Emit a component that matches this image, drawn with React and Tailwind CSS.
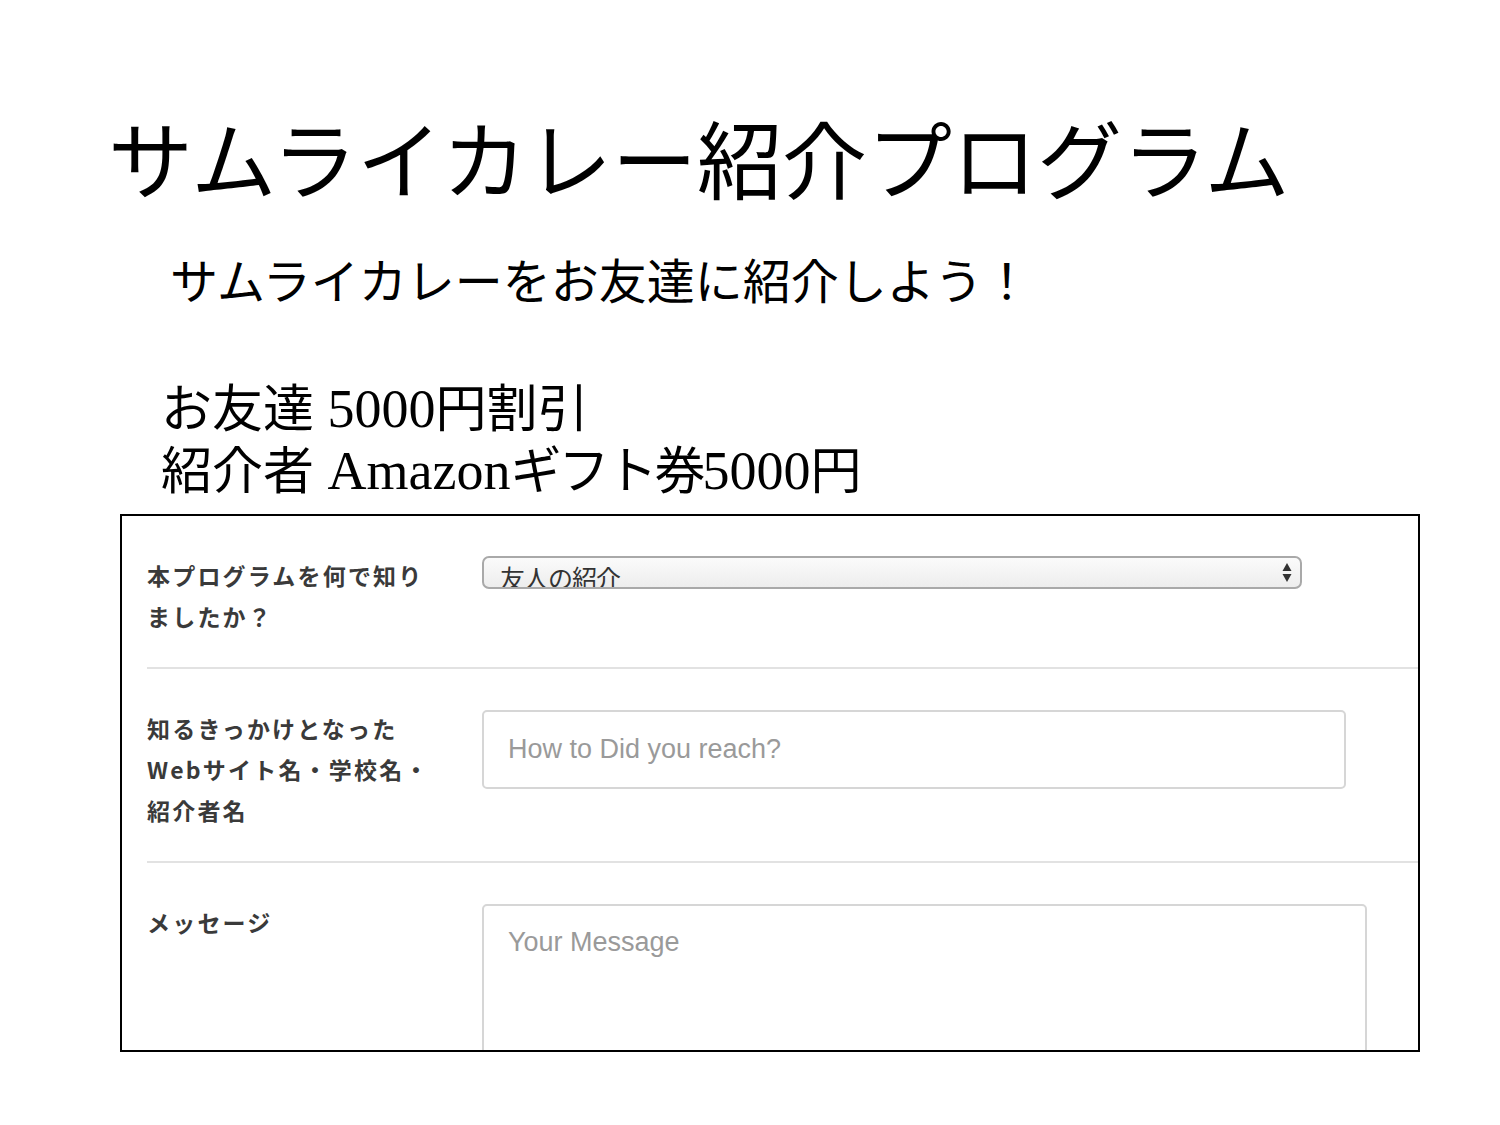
import React from 'react';

const jp = '"Noto Sans CJK JP", "Liberation Sans", sans-serif';
const serif = '"Liberation Serif", "Noto Sans CJK JP", serif';

const Row = ({ label, children, last }) => (
  <div className={`ml-[25px] flex pt-[39px] pb-[30px] ${last ? '' : 'border-b-2 border-[#e2e2e2]'}`}>
    <div
      className="w-[335px] shrink-0 text-[23px] leading-[41px] font-bold tracking-[2.2px] text-[#3a3a3a]"
      style={{ fontFamily: jp }}
    >
      {label}
    </div>
    <div className="flex-1">{children}</div>
  </div>
);

const Num = ({ children }) => (
  <span className="text-[54px] leading-[40px]" style={{ fontFamily: serif }}>
    {children}
  </span>
);

const App = () => {
  return (
    <div className="w-[1500px] h-[1125px] bg-white text-black" style={{ fontFamily: jp }}>
      <div className="pt-[106px] pl-[108px] text-[85px] leading-[100px]">サムライカレー紹介プログラム</div>
      <div className="pt-[44px] pl-[170px] text-[48px] leading-[56px]">サムライカレーをお友達に紹介しよう！</div>

      <div className="pt-[68px] pl-[161px] text-[51px] leading-[62px]">
        <div>
          お友達<Num> 5000</Num>円割引
        </div>
        <div>
          紹介者<Num> Amazon</Num>
          <span className="tracking-[-3px]">ギフト券</span>
          <Num>5000</Num>円
        </div>
      </div>

      <div className="mt-[16px] ml-[120px] w-[1300px] h-[538px] border-2 border-black overflow-hidden">
        <Row
          label={
            <>
              本プログラムを何で知り
              <br />
              ましたか？
            </>
          }
        >
          <div className="w-[820px] h-[33px] mt-[1px] rounded-[7px] border-2 border-[#a9a9a9] bg-gradient-to-b from-[#fbfbfb] to-[#ededed] overflow-hidden flex items-start justify-between pl-[16px] pr-[8px]">
            <span className="mt-[4px] text-[25px] leading-[30px] text-[#333] tracking-[-1px]">友人の紹介</span>
            <svg className="mt-[5px]" width="10" height="19" viewBox="0 0 10 19">
              <path d="M5 0 L9.5 8 L0.5 8 Z" fill="#333" />
              <path d="M5 19 L9.5 11 L0.5 11 Z" fill="#333" />
            </svg>
          </div>
        </Row>
        <Row
          label={
            <>
              知るきっかけとなった
              <br />
              Webサイト名・学校名・
              <br />
              紹介者名
            </>
          }
        >
          <input
            readOnly
            placeholder="How to Did you reach?"
            className="w-[864px] h-[79px] mt-[2px] rounded-[5px] border-2 border-[#d6d6d6] px-[24px] text-[27px] outline-none placeholder:text-[#9a9a9a]"
            style={{ fontFamily: '"Liberation Sans", sans-serif' }}
          />
        </Row>
        <Row label="メッセージ" last>
          <textarea
            readOnly
            placeholder="Your Message"
            className="block w-[885px] h-[260px] mt-[2px] rounded-[5px] border-2 border-[#d6d6d6] px-[24px] pt-[20px] text-[27px] leading-[32px] resize-none outline-none placeholder:text-[#9a9a9a]"
            style={{ fontFamily: '"Liberation Sans", sans-serif' }}
          />
        </Row>
      </div>
    </div>
  );
};

export default App;
